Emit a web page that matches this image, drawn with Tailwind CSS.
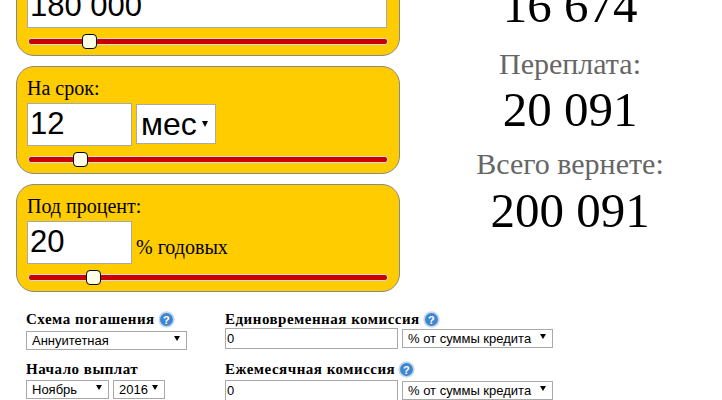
<!DOCTYPE html>
<html lang="ru">
<head>
  <meta charset="UTF-8" />
  <meta name="viewport" content="width=device-width, initial-scale=1.0" />
  <title>Кредитный калькулятор</title>
  <script src="https://cdn.jsdelivr.net/npm/@tailwindcss/browser@4"></script>
</head>
<body class="bg-white h-[400px] overflow-hidden font-['Liberation_Serif',serif] text-black">
  <div class="-mt-[52px] pl-4">
    <div class="flex">
      <!-- sliders -->
      <div class="w-[384px] flex flex-col gap-[10px]">
        <div class="h-[108px] bg-[#ffcc00] border border-[#888] rounded-[18px] px-[10px] pt-[11px]">
          <div class="text-[20px] leading-[21px]">Сумма:</div>
          <input value="180 000" class="mt-[4px] block w-[360px] h-[43px] bg-white border border-[#a9a9a9] px-[2px] text-[31px] font-['Liberation_Sans',sans-serif] outline-none" />
          <div class="relative mt-[10px] ml-[1px] h-[7px] w-[360px] bg-[#cc0000] border border-[#ddd] rounded-[3px]">
            <div class="absolute left-[53px] -top-[5px] w-[15px] h-[15px] bg-[#ffffe8] border border-black rounded-[4px]"></div>
          </div>
        </div>
        <div class="h-[108px] bg-[#ffcc00] border border-[#888] rounded-[18px] px-[10px] pt-[11px]">
          <div class="text-[20px] leading-[21px]">На срок:</div>
          <div class="mt-[4px] flex items-start gap-[4px] h-[43px]">
            <input value="12" class="w-[105px] h-[43px] bg-white border border-[#a9a9a9] px-[2px] text-[31px] font-['Liberation_Sans',sans-serif] outline-none" />
            <div class="relative mt-[1px]">
              <select class="block appearance-none w-[80px] h-[40px] bg-white border border-[#a9a9a9] pl-[4px] text-[32px] leading-[36px] font-['Liberation_Sans',sans-serif] outline-none rounded-none">
                <option>мес</option>
              </select>
              <svg class="absolute right-[8px] top-[17px] w-[6px] h-[6px]" viewBox="0 0 6 6"><path d="M0 0H6L3 6Z" fill="#000"/></svg>
            </div>
          </div>
          <div class="relative mt-[10px] ml-[1px] h-[7px] w-[360px] bg-[#cc0000] border border-[#ddd] rounded-[3px]">
            <div class="absolute left-[44px] -top-[5px] w-[15px] h-[15px] bg-[#ffffe8] border border-black rounded-[4px]"></div>
          </div>
        </div>
        <div class="h-[108px] bg-[#ffcc00] border border-[#888] rounded-[18px] px-[10px] pt-[11px]">
          <div class="text-[20px] leading-[21px]">Под процент:</div>
          <div class="mt-[4px] flex items-end gap-[4px] h-[43px]">
            <input value="20" class="w-[105px] h-[43px] bg-white border border-[#a9a9a9] px-[2px] text-[31px] font-['Liberation_Sans',sans-serif] outline-none" />
            <span class="text-[20px] leading-[21px] pb-[6px]">% годовых</span>
          </div>
          <div class="relative mt-[10px] ml-[1px] h-[7px] w-[360px] bg-[#cc0000] border border-[#ddd] rounded-[3px]">
            <div class="absolute left-[57px] -top-[5px] w-[15px] h-[15px] bg-[#ffffe8] border border-black rounded-[4px]"></div>
          </div>
        </div>
      </div>
      <!-- results -->
      <div class="ml-[18px] w-[304px] text-center">
        <div class="h-[100px] text-[49px] leading-[55px] pt-[30px]">16 674</div>
        <div class="text-[30px] leading-[32px] text-[#666]">Переплата:</div>
        <div class="text-[49px] leading-[55px] mt-[2px]">20 091</div>
        <div class="text-[30px] leading-[32px] mt-[11px] text-[#666]">Всего вернете:</div>
        <div class="text-[49px] leading-[55px] mt-[3px]">200 091</div>
      </div>
    </div>
    <!-- extra options -->
    <div class="flex pl-[10px] mt-[18px]">
      <div class="w-[199px]">
        <div class="flex items-center gap-[3px] h-[18px] text-[15px] font-bold tracking-[0.5px]">Схема погашения
          <svg class="w-[17px] h-[17px]" viewBox="0 0 17 17"><circle cx="8.5" cy="8.5" r="8.2" fill="#c5d8ee"/><circle cx="8.5" cy="8.5" r="6.5" fill="#3f86cf"/><text x="8.5" y="12.5" text-anchor="middle" font-size="11" font-weight="700" font-family="Liberation Sans" fill="#fff">?</text></svg>
        </div>
        <div class="relative mt-[3px] w-[161px]">
          <select class="block appearance-none w-full h-[19px] bg-white border border-[#a9a9a9] pl-[5px] text-[13px] leading-[15px] font-['Liberation_Sans',sans-serif] rounded-none outline-none"><option>Аннуитетная</option></select>
          <svg class="absolute right-[7px] top-[5px] w-[6px] h-[5px]" viewBox="0 0 6 5"><path d="M0 0H6L3 5Z" fill="#000"/></svg>
        </div>
        <div class="h-[18px] mt-[10px] text-[15px] font-bold tracking-[0.5px] leading-[18px]">Начало выплат</div>
        <div class="mt-[2px] flex gap-[4px]">
          <div class="relative w-[83px]">
            <select class="block appearance-none w-full h-[19px] bg-white border border-[#a9a9a9] pl-[5px] text-[13px] leading-[15px] font-['Liberation_Sans',sans-serif] rounded-none outline-none"><option>Ноябрь</option></select>
            <svg class="absolute right-[7px] top-[5px] w-[6px] h-[5px]" viewBox="0 0 6 5"><path d="M0 0H6L3 5Z" fill="#000"/></svg>
          </div>
          <div class="relative w-[52px]">
            <select class="block appearance-none w-full h-[19px] bg-white border border-[#a9a9a9] pl-[5px] text-[13px] leading-[15px] font-['Liberation_Sans',sans-serif] rounded-none outline-none"><option>2016</option></select>
            <svg class="absolute right-[7px] top-[5px] w-[6px] h-[5px]" viewBox="0 0 6 5"><path d="M0 0H6L3 5Z" fill="#000"/></svg>
          </div>
        </div>
      </div>
      <div>
        <div class="flex items-center gap-[3px] h-[18px] text-[15px] font-bold tracking-[0.5px]">Единовременная комиссия
          <svg class="w-[17px] h-[17px]" viewBox="0 0 17 17"><circle cx="8.5" cy="8.5" r="8.2" fill="#c5d8ee"/><circle cx="8.5" cy="8.5" r="6.5" fill="#3f86cf"/><text x="8.5" y="12.5" text-anchor="middle" font-size="11" font-weight="700" font-family="Liberation Sans" fill="#fff">?</text></svg>
        </div>
        <div class="flex gap-[4px]">
          <input value="0" class="w-[173px] h-[21px] bg-white border border-[#a9a9a9] px-[1px] text-[13px] font-['Liberation_Sans',sans-serif] outline-none" />
          <div class="relative mt-[1px] w-[151px]">
            <select class="block appearance-none w-full h-[19px] bg-white border border-[#a9a9a9] pl-[5px] text-[13px] leading-[15px] font-['Liberation_Sans',sans-serif] rounded-none outline-none"><option>% от суммы кредита</option></select>
            <svg class="absolute right-[7px] top-[5px] w-[6px] h-[5px]" viewBox="0 0 6 5"><path d="M0 0H6L3 5Z" fill="#000"/></svg>
          </div>
        </div>
        <div class="flex items-center gap-[3px] h-[18px] mt-[11px] text-[15px] font-bold tracking-[0.5px]">Ежемесячная комиссия
          <svg class="w-[17px] h-[17px]" viewBox="0 0 17 17"><circle cx="8.5" cy="8.5" r="8.2" fill="#c5d8ee"/><circle cx="8.5" cy="8.5" r="6.5" fill="#3f86cf"/><text x="8.5" y="12.5" text-anchor="middle" font-size="11" font-weight="700" font-family="Liberation Sans" fill="#fff">?</text></svg>
        </div>
        <div class="mt-[2px] flex gap-[4px]">
          <input value="0" class="w-[173px] h-[21px] bg-white border border-[#a9a9a9] px-[1px] text-[13px] font-['Liberation_Sans',sans-serif] outline-none" />
          <div class="relative mt-[1px] w-[151px]">
            <select class="block appearance-none w-full h-[19px] bg-white border border-[#a9a9a9] pl-[5px] text-[13px] leading-[15px] font-['Liberation_Sans',sans-serif] rounded-none outline-none"><option>% от суммы кредита</option></select>
            <svg class="absolute right-[7px] top-[5px] w-[6px] h-[5px]" viewBox="0 0 6 5"><path d="M0 0H6L3 5Z" fill="#000"/></svg>
          </div>
        </div>
      </div>
    </div>
  </div>
</body>
</html>
